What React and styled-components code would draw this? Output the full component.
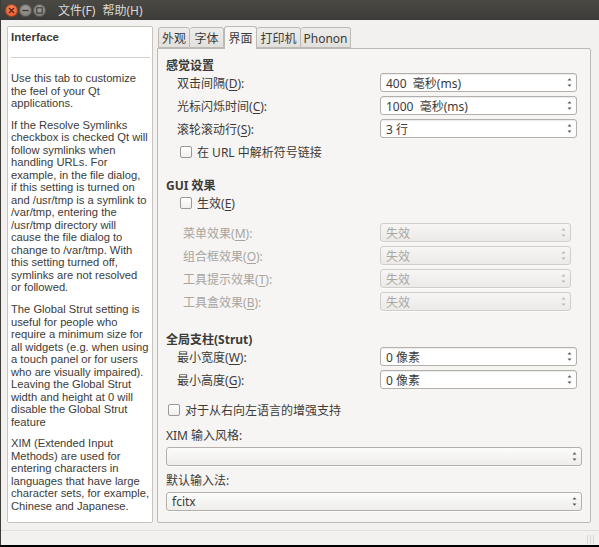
import React from 'react';
import styled, { createGlobalStyle, css } from 'styled-components';

const GlobalStyle = createGlobalStyle`
  html, body { margin: 0; padding: 0; background: #000; }
  body { font-family: "Noto Sans", "Noto Sans CJK SC", sans-serif; }
  #root { width: 599px; height: 547px; overflow: hidden; }
`;

const Window = styled.div`
  width: 599px;
  height: 545px;
  background: #f2f1f0;
  display: flex;
  flex-direction: column;
  border-left: 1px solid #3c3b37;
  box-sizing: border-box;
  overflow: hidden;
`;

const TitleBar = styled.div`
  height: 20px;
  flex: none;
  background: linear-gradient(#4a4944, #3c3b37);
  display: flex;
  align-items: center;
  padding-left: 4px;
  gap: 1px;
`;

const WinButton = styled.div`
  width: 13px;
  height: 13px;
  border-radius: 50%;
  display: flex;
  align-items: center;
  justify-content: center;
  box-shadow: inset 0 0 0 1px rgba(0, 0, 0, 0.35);
  ${(p) =>
    p.$kind === 'close'
      ? css`background: radial-gradient(circle at 50% 35%, #f78a5e, #df4b1c);`
      : css`background: radial-gradient(circle at 50% 35%, #a09d97, #76736e);`}
`;

const Menu = styled.div`
  display: flex;
  gap: 7px;
  margin-left: 11px;
  color: #dcd9d2;
  font-size: 12px;
  font-family: "Noto Sans", "Noto Sans CJK SC", sans-serif;
`;

const Body = styled.div`
  display: flex;
  gap: 4px;
  padding: 6px 0 0 6px;
  height: 497px;
  flex: none;
`;

const HelpPanel = styled.div`
  width: 146px;
  height: 497px;
  box-sizing: border-box;
  background: #fff;
  border: 1px solid #c7c4bf;
  border-radius: 2px;
  padding: 0 3px;
  color: #3c3b37;
  font-family: "Liberation Sans", Arial, sans-serif;
`;

const HelpTitle = styled.div`
  font-weight: 700;
  font-size: 11.5px;
  height: 20px;
  line-height: 19px;
  padding-top: 1px;
  border-bottom: 1px solid #d4d1cc;
  margin-bottom: 14px;
  margin-right: -1px;
  padding-bottom: 9px;
  box-sizing: content-box;
`;

const HelpPara = styled.p`
  margin: 0 0 9.3px 0;
  font-size: 11.2px;
  line-height: 12.5px;
  white-space: nowrap;
`;

const TabWidget = styled.div`
  width: 434px;
  display: flex;
  flex-direction: column;
`;

const TabBar = styled.div`
  display: flex;
  height: 22px;
  padding-left: 1px;
  align-items: flex-end;
  position: relative;
  z-index: 1;
`;

const Tab = styled.div`
  width: ${(p) => p.$w}px;
  box-sizing: border-box;
  height: ${(p) => (p.$active ? 23 : 21)}px;
  margin-bottom: ${(p) => (p.$active ? -1 : 0)}px;
  border: 1px solid #bdbab5;
  border-bottom: ${(p) => (p.$active ? 'none' : '1px solid #bdbab5')};
  border-left: ${(p) => (p.$first || p.$active ? '1px solid #bdbab5' : 'none')};
  border-radius: 3px 3px 0 0;
  background: ${(p) => (p.$active ? '#f6f5f4' : 'linear-gradient(#eeedeb, #e2e0dd)')};
  display: flex;
  align-items: center;
  justify-content: center;
  font-size: 12px;
  color: #3c3b37;
  font-family: "Noto Sans", "Noto Sans CJK SC", sans-serif;
  padding-top: ${(p) => (p.$active ? 0 : 1)}px;
`;

const Pane = styled.div`
  height: 475px;
  box-sizing: border-box;
  border: 1px solid #bdbab5;
  border-radius: 0 2px 2px 2px;
  background: #f6f5f4;
  display: flex;
  flex-direction: column;
  padding: 0 0 0 8px;
  font-size: 12px;
  color: #3c3b37;
  font-family: "Noto Sans", "Noto Sans CJK SC", sans-serif;
`;

const Header = styled.div`
  height: 15px;
  line-height: 15px;
  font-weight: 700;
  margin-top: ${(p) => p.$mt || 0}px;
`;

const Row = styled.div`
  display: flex;
  align-items: center;
  height: ${(p) => p.$h || 19}px;
  margin-top: ${(p) => p.$mt || 0}px;
  padding-left: ${(p) => p.$indent || 0}px;
  padding-right: ${(p) => p.$right || 0}px;
  color: ${(p) => (p.$disabled ? '#a8a5a0' : '#3c3b37')};
`;

const Label = styled.span`
  flex: 1;
  white-space: pre;
  u { text-decoration: underline; text-underline-offset: 2px; }
`;

const Field = styled.div`
  width: ${(p) => p.$w}px;
  height: 19px;
  box-sizing: border-box;
  border: 1px solid ${(p) => (p.$disabled ? '#d0ceca' : '#b3b0ab')};
  border-radius: 3px;
  display: flex;
  align-items: center;
  padding: 0 4px 0 5px;
  white-space: pre;
  color: ${(p) => (p.$disabled ? '#aaa7a2' : '#3c3b37')};
  background: ${(p) =>
    p.$kind === 'spin'
      ? '#fff'
      : p.$disabled
      ? 'linear-gradient(#f7f6f5, #eceae8)'
      : 'linear-gradient(#fcfcfb, #eeedeb)'};
  box-shadow: ${(p) => (p.$kind === 'spin' ? 'inset 0 1px 1px rgba(0,0,0,0.08)' : '0 1px 0 rgba(255,255,255,0.7)')};
`;

const FieldText = styled.span`
  flex: 1;
`;

const Check = styled.span`
  width: 12px;
  height: 12px;
  box-sizing: border-box;
  border: 1px solid #9c9892;
  border-radius: 2px;
  background: linear-gradient(#ffffff, #f0efed);
  margin-right: 5px;
  flex: none;
`;

const Footer = styled.div`
  flex: 1;
  border-top: 1px solid #e2e0dd;
  margin-top: 7px;
  display: flex;
  justify-content: flex-end;
  align-items: flex-end;
  padding: 0 3px 1px 0;
`;

const Arrows = ({ disabled }) => (
  <svg width="5" height="11" viewBox="0 0 5 11">
    <path d="M0.5 3.5 L2.5 1.2 L4.5 3.5 Z" fill={disabled ? '#b9b6b1' : '#5a5853'} />
    <path d="M0.5 7.5 L2.5 9.8 L4.5 7.5 Z" fill={disabled ? '#b9b6b1' : '#5a5853'} />
  </svg>
);

const Grip = () => (
  <svg width="10" height="10" viewBox="0 0 10 10">
    {[0, 3, 6].map((x) => (
      <rect key={x} x={x + 1} y={1} width="1" height="9" fill="#d8d6d2" />
    ))}
  </svg>
);

const L = ({ text, k, rest }) => (
  <Label>
    {text}(<u>{k}</u>){rest === undefined ? ':' : rest}
  </Label>
);

const helpParas = [
  ['Use this tab to customize', 'the feel of your Qt', 'applications.'],
  [
    'If the Resolve Symlinks',
    'checkbox is checked Qt will',
    'follow symlinks when',
    'handling URLs. For',
    'example, in the file dialog,',
    'if this setting is turned on',
    'and /usr/tmp is a symlink to',
    '/var/tmp, entering the',
    '/usr/tmp directory will',
    'cause the file dialog to',
    'change to /var/tmp. With',
    'this setting turned off,',
    'symlinks are not resolved',
    'or followed.',
  ],
  [
    'The Global Strut setting is',
    'useful for people who',
    'require a minimum size for',
    'all widgets (e.g. when using',
    'a touch panel or for users',
    'who are visually impaired).',
    'Leaving the Global Strut',
    'width and height at 0 will',
    'disable the Global Strut',
    'feature',
  ],
  [
    'XIM (Extended Input',
    'Methods) are used for',
    'entering characters in',
    'languages that have large',
    'character sets, for example,',
    'Chinese and Japanese.',
  ],
];

const tabs = [
  { t: '外观', w: 32 },
  { t: '字体', w: 34 },
  { t: '界面', w: 33, active: true },
  { t: '打印机', w: 44 },
  { t: 'Phonon', w: 50 },
];

export default function App() {
  return (
    <>
      <GlobalStyle />
      <Window>
        <TitleBar>
          <WinButton $kind="close">
            <svg width="7" height="7" viewBox="0 0 7 7">
              <path d="M1 1 L6 6 M6 1 L1 6" stroke="#5a1f0c" strokeWidth="1.3" />
            </svg>
          </WinButton>
          <WinButton>
            <svg width="7" height="7" viewBox="0 0 7 7">
              <path d="M0.5 3.5 H6.5" stroke="#3a3935" strokeWidth="1.3" />
            </svg>
          </WinButton>
          <WinButton>
            <svg width="7" height="7" viewBox="0 0 7 7">
              <rect x="0.8" y="0.8" width="5.4" height="5.4" fill="none" stroke="#3a3935" strokeWidth="1.1" />
            </svg>
          </WinButton>
          <Menu>
            <span>文件(F)</span>
            <span>帮助(H)</span>
          </Menu>
        </TitleBar>
        <Body>
          <HelpPanel>
            <HelpTitle>Interface</HelpTitle>
            {helpParas.map((p, i) => (
              <HelpPara key={i}>
                {p.map((line, j) => (
                  <React.Fragment key={j}>
                    {line}
                    {j < p.length - 1 && <br />}
                  </React.Fragment>
                ))}
              </HelpPara>
            ))}
          </HelpPanel>
          <TabWidget>
            <TabBar>
              {tabs.map((t, i) => (
                <Tab key={t.t} $w={t.w} $active={t.active} $first={i === 0}>
                  {t.t}
                </Tab>
              ))}
            </TabBar>
            <Pane>
              <Header $mt={9}>感觉设置</Header>
              <Row $indent={11} $right={13}>
                <L text="双击间隔" k="D" />
                <Field $w={197} $kind="spin">
                  <FieldText>400  毫秒(ms)</FieldText>
                  <Arrows />
                </Field>
              </Row>
              <Row $indent={11} $right={13} $mt={4}>
                <L text="光标闪烁时间" k="C" />
                <Field $w={197} $kind="spin">
                  <FieldText>1000  毫秒(ms)</FieldText>
                  <Arrows />
                </Field>
              </Row>
              <Row $indent={11} $right={13} $mt={4}>
                <L text="滚轮滚动行" k="S" />
                <Field $w={197} $kind="spin">
                  <FieldText>3 行</FieldText>
                  <Arrows />
                </Field>
              </Row>
              <Row $indent={14} $mt={4}>
                <Check />
                <Label>在 URL 中解析符号链接</Label>
              </Row>

              <Header $mt={17}>GUI 效果</Header>
              <Row $indent={14}>
                <Check />
                <L text="生效" k="E" rest="" />
              </Row>
              {[
                ['菜单效果', 'M'],
                ['组合框效果', 'O'],
                ['工具提示效果', 'T'],
                ['工具盒效果', 'B'],
              ].map(([t, k], i) => (
                <Row key={k} $indent={17} $right={19} $mt={i === 0 ? 11 : 4} $disabled>
                  <L text={t} k={k} />
                  <Field $w={191} $disabled>
                    <FieldText>失效</FieldText>
                    <Arrows disabled />
                  </Field>
                </Row>
              ))}

              <Header $mt={21}>全局支柱(Strut)</Header>
              <Row $indent={11} $right={13}>
                <L text="最小宽度" k="W" />
                <Field $w={197} $kind="spin">
                  <FieldText>0 像素</FieldText>
                  <Arrows />
                </Field>
              </Row>
              <Row $indent={11} $right={13} $mt={4}>
                <L text="最小高度" k="G" />
                <Field $w={197} $kind="spin">
                  <FieldText>0 像素</FieldText>
                  <Arrows />
                </Field>
              </Row>
              <Row $indent={2} $mt={11}>
                <Check />
                <Label>对于从右向左语言的增强支持</Label>
              </Row>
              <Row $h={16} $mt={8}>
                <Label>XIM 输入风格:</Label>
              </Row>
              <Row $right={8} $mt={4}>
                <Field $w={416}>
                  <FieldText></FieldText>
                  <Arrows />
                </Field>
              </Row>
              <Row $h={16} $mt={6}>
                <Label>默认输入法:</Label>
              </Row>
              <Row $right={8} $mt={4}>
                <Field $w={416}>
                  <FieldText>fcitx</FieldText>
                  <Arrows />
                </Field>
              </Row>
            </Pane>
          </TabWidget>
        </Body>
        <Footer>
          <Grip />
        </Footer>
      </Window>
    </>
  );
}
